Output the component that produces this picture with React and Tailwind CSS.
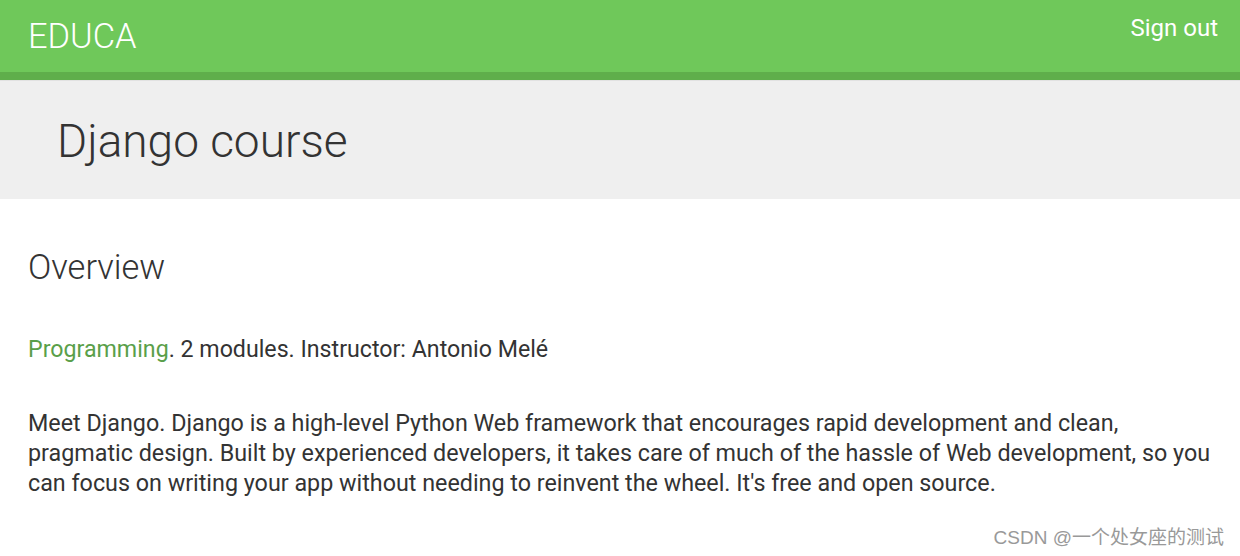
export default function App() {
  return (
    <div className="min-h-screen bg-white font-['Roboto',sans-serif] text-[#333]">
      <header className="border-b-[8px] border-[#5fae4b] bg-[#6fc85a]">
        <div className="flex h-[72px] items-start justify-between pl-7 pr-[22px]">
          <a className="mt-[14px] text-[34.4px] font-light leading-[44px] text-white">EDUCA</a>
          <a className="mt-[12px] text-[24px] leading-[32px] text-white">Sign out</a>
        </div>
      </header>
      <div className="border-t border-[#e2e2e2] bg-[#efefef] px-[57px] pb-[28px] pt-[30px]">
        <h1 className="text-[46px] font-light leading-[60px] text-[#333]">Django course</h1>
      </div>
      <main className="pl-7 pr-[22px] pt-[46px]">
        <h2 className="text-[34.4px] font-light leading-[44px] text-[#333]">Overview</h2>
        <p className="mt-[45px] text-[23.2px] leading-[30px]">
          <a className="text-[#5a9f4a]">Programming</a>. 2 modules. Instructor: Antonio Melé
        </p>
        <div className="mt-[44px] text-[23.3px] leading-[30px]">
          <p>
            Meet Django. Django is a high-level Python Web framework that encourages rapid development and clean,
            pragmatic design. Built by experienced developers, it takes care of much of the hassle of Web development,
            so you can focus on writing your app without needing to reinvent the wheel. It's free and open source.
          </p>
        </div>
      </main>
      <div className="flex justify-end pr-4 pt-[26px]">
        <span className="font-['Liberation_Sans','Noto_Sans_CJK_SC',sans-serif] text-[19px] text-[#999]">CSDN @一个处女座的测试</span>
      </div>
    </div>
  )
}
